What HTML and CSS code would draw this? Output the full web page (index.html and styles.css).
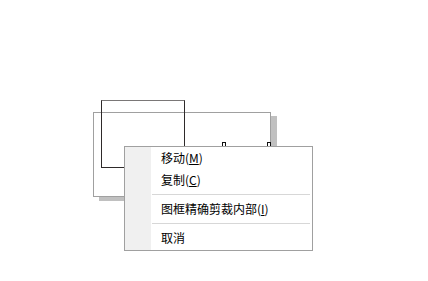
FILE: index.html
```html
<!DOCTYPE html>
<html lang="zh">
<head>
<meta charset="utf-8">
<link rel="stylesheet" href="styles.css">
</head>
<body>
<div class="canvas">
  <div class="frame"></div>
  <div class="outline"></div>
  <div class="handle h1"></div>
  <div class="handle h2"></div>
  <div class="menu">
    <div class="item">移动(<u>M</u>)</div>
    <div class="item">复制(<u>C</u>)</div>
    <div class="sep"></div>
    <div class="item">图框精确剪裁内部(<u>I</u>)</div>
    <div class="sep"></div>
    <div class="item">取消</div>
  </div>
</div>
</body>
</html>
```
FILE: styles.css
```css
html, body {
  margin: 0;
  padding: 0;
  background: #ffffff;
}
.canvas {
  position: relative;
  width: 428px;
  height: 281px;
  overflow: hidden;
  font-family: "Noto Sans CJK SC", "Microsoft YaHei", sans-serif;
}
.frame {
  position: absolute;
  left: 93px;
  top: 112px;
  width: 176px;
  height: 83px;
  border: 1px solid #a0a0a0;
  background: #ffffff;
  box-shadow: 6px 4px 0 #c0c0c0;
}
.outline {
  position: absolute;
  left: 101px;
  top: 100px;
  width: 82px;
  height: 66px;
  border: 1px solid #2e2a2a;
  border-top-color: #7a7777;
}
.handle {
  position: absolute;
  top: 142px;
  width: 2px;
  height: 4px;
  border: 1px solid #111;
  border-bottom: none;
  background: #fff;
}
.h1 { left: 222px; }
.h2 { left: 267px; }
.menu {
  position: absolute;
  left: 124px;
  top: 146px;
  width: 187px;
  height: 102px;
  border: 1px solid #a0a0a0;
  background: linear-gradient(to right, #f0f0f0 0, #f0f0f0 26px, #ffffff 26px);
  padding: 0 0 1px 0;
  box-sizing: content-box;
}
.item {
  height: 22px;
  line-height: 22px;
  padding-left: 36px;
  font-size: 12px;
  color: #000;
  white-space: nowrap;
}
.item u {
  text-decoration: underline;
  text-underline-offset: 1px;
}
.sep {
  height: 1px;
  background: #d7d7d7;
  margin: 3px 2px 3px 27px;
}
```
